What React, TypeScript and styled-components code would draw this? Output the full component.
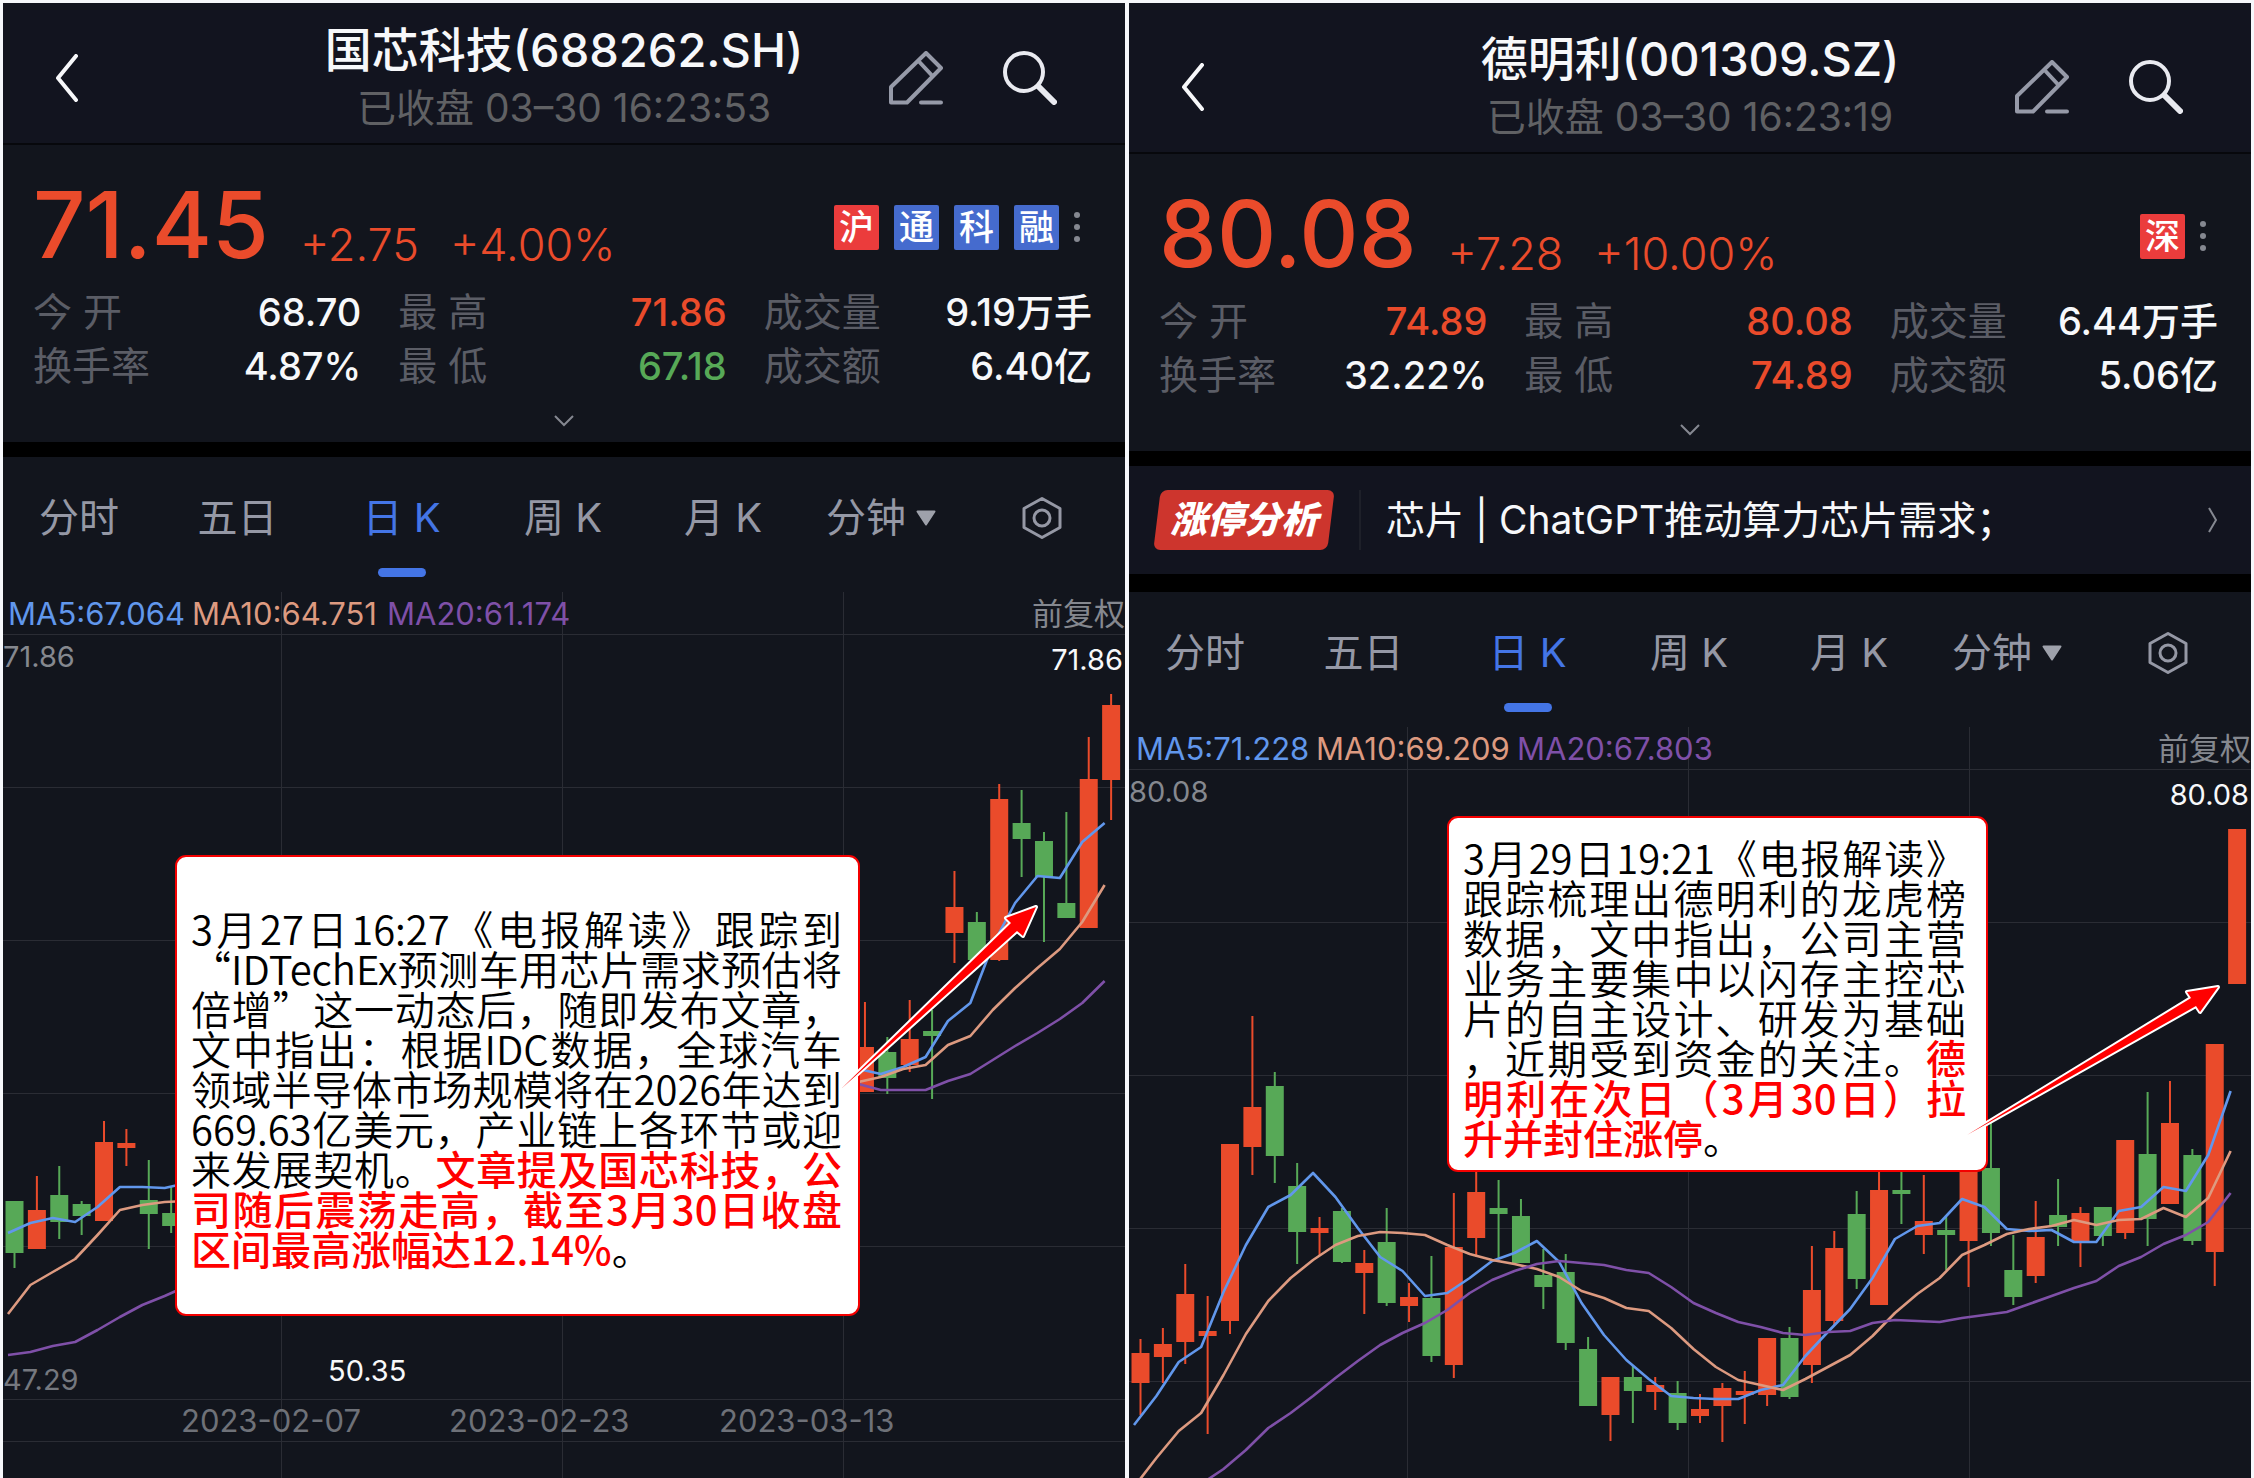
import React from 'react';
import styled, { createGlobalStyle } from 'styled-components';

const RED = '#ea4b2b';
const GREEN = '#57a957';
const WHITE = '#f7f8fa';
const ACCENT = '#4475e6';
const MA5 = '#6197ec';
const MA10 = '#dd9a80';
const MA20 = '#7f50a8';

const Global = createGlobalStyle`
  * { box-sizing: border-box; }
  body {
    margin: 0;
    background: #f6f7fb;
    font-family: Inter, "Noto Sans CJK SC", sans-serif;
  }
  button {
    padding: 0;
    border: 0;
    background: none;
    color: inherit;
    font: inherit;
    cursor: pointer;
  }
  svg { display: block; }
`;

const Page = styled.main`
  display: grid;
  grid-template-columns: 1fr 1fr;
  gap: 4px;
  min-height: 100vh;
  padding: 3px 3px 0 3px;
`;

const Panel = styled.section`
  display: flex;
  flex-direction: column;
  min-width: 0;
  overflow: hidden;
  background: #12151d;
`;

const Header = styled.header<{ $top: number }>`
  display: grid;
  grid-template-columns: 1fr auto 1fr;
  align-items: center;
  padding: ${(p) => p.$top}px 0 7px;
  border-bottom: 2px solid #07080c;
  background: #12141f;
`;

const BackButton = styled.button`
  justify-self: start;
  margin-left: 52px;
`;

const HeaderActions = styled.div`
  display: flex;
  justify-content: flex-end;
  gap: 60px;
  padding-right: 68px;
`;

const Titles = styled.div`
  text-align: center;
  white-space: nowrap;
`;

const Title = styled.h1`
  margin: 0;
  color: ${WHITE};
  font-size: 47px;
  font-weight: 500;
  line-height: 60px;
`;

const Subtitle = styled.p`
  margin: 0;
  color: #606164;
  font-size: 39px;
  line-height: 56px;
`;

const Quote = styled.div`
  display: flex;
  flex-direction: column;
  gap: 12px;
  padding: 32px 33px 0 30px;
`;

const PriceRow = styled.div`
  display: flex;
  align-items: flex-end;
  gap: 31px;
  height: 96px;
  color: ${RED};
`;

const Price = styled.strong`
  font-size: 92px;
  font-weight: 500;
  line-height: 96px;
`;

const Change = styled.span`
  font-size: 45px;
  font-weight: 300;
  line-height: 56px;
`;

const Badges = styled.div`
  display: flex;
  align-items: center;
  align-self: center;
  gap: 15px;
  margin-left: auto;
  padding: 4px 12px 0 0;
`;

const Badge = styled.span<{ $hot?: boolean }>`
  width: 45px;
  border-radius: 2px;
  background: ${(p) => (p.$hot ? '#eb3c3c' : '#456bce')};
  color: #fff;
  font-size: 35px;
  font-weight: 500;
  line-height: 45px;
  text-align: center;
`;

const Stats = styled.dl`
  display: grid;
  grid-template-columns: repeat(3, 1fr);
  column-gap: 37px;
  margin: 0;
`;

const Stat = styled.div`
  display: flex;
  justify-content: space-between;
  line-height: 54px;
  white-space: nowrap;
`;

const StatLabel = styled.dt`
  color: #5b5d66;
  font-size: 39px;
`;

const StatValue = styled.dd<{ $color: string }>`
  margin: 0;
  color: ${(p) => p.$color};
  font-size: 38px;
  font-weight: 500;
`;

const Expand = styled.button`
  display: flex;
  align-items: center;
  justify-content: center;
  height: 49px;
  padding-top: 6px;
`;

const Strip = styled.div<{ $size: number }>`
  height: ${(p) => p.$size}px;
  background: #000;
`;

const Analysis = styled.a`
  display: flex;
  align-items: center;
  height: 108px;
  padding: 0 34px 0 28px;
  background: #12141f;
  color: ${WHITE};
  text-decoration: none;
`;

const AnalysisTag = styled.span`
  position: relative;
  z-index: 0;
  width: 174px;
  color: #fff;
  font-size: 37px;
  font-style: italic;
  font-weight: 900;
  line-height: 60px;
  text-align: center;
  white-space: nowrap;

  &::before {
    content: '';
    position: absolute;
    inset: 0;
    z-index: -1;
    border-radius: 7px;
    background: #cd352d;
    transform: skewX(-7deg);
  }
`;

const AnalysisText = styled.span`
  flex: 1;
  margin-left: 28px;
  padding-left: 25px;
  border-left: 2px solid #1e2029;
  font-size: 39px;
  line-height: 60px;
  white-space: nowrap;
`;

const Tabs = styled.nav`
  display: grid;
  grid-template-columns: 152fr 165fr 163fr 160fr 160fr 156fr 166fr;
  justify-items: center;
  align-items: start;
  height: 135px;
  padding-top: 37px;
`;

const Tab = styled.button<{ $active?: boolean }>`
  display: flex;
  align-items: center;
  justify-content: center;
  gap: 10px;
  position: relative;
  height: 48px;
  color: ${(p) => (p.$active ? ACCENT : '#9598a5')};
  font-size: 40px;
  line-height: 48px;
  white-space: nowrap;

  &::after {
    content: '';
    display: ${(p) => (p.$active ? 'block' : 'none')};
    position: absolute;
    top: 74px;
    width: 48px;
    height: 9px;
    border-radius: 5px;
    background: ${ACCENT};
  }
`;

const Plot = styled.div`
  position: relative;
  flex: 1;
  min-height: 700px;
`;

const Layer = styled.svg`
  position: absolute;
  inset: 0;
  width: 100%;
  height: 100%;
`;

const Label = styled.text<{ $color: string; $size?: number }>`
  fill: ${(p) => p.$color};
  font-size: ${(p) => p.$size ?? 29}px;
`;

const Callout = styled.aside<{ $left: number; $top: number; $width: number; $pad: string }>`
  position: absolute;
  left: ${(p) => p.$left}px;
  top: ${(p) => p.$top}px;
  width: ${(p) => p.$width}px;
  padding: ${(p) => p.$pad};
  border: 2px solid #f40000;
  border-radius: 11px;
  background: #fff;
  color: #000;
  font-family: "Noto Sans CJK SC", sans-serif;
  font-size: 40px;
  font-weight: 350;
  line-height: 40px;
  text-spacing-trim: space-all;
`;

const Line = styled.span<{ $loose?: boolean }>`
  display: block;
  text-align-last: ${(p) => (p.$loose ? 'left' : 'justify')};
  white-space: nowrap;
`;

const Mark = styled.b`
  color: #f00;
  font-weight: 500;
`;

type Pair = [number, number];
/* index, body top, body bottom, wick top, wick bottom, colour */
type Candle = [number, number, number, number, number, 'r' | 'g'];

interface Stock {
  title: string;
  time: string;
  headerTop: number;
  price: string;
  change: string;
  percent: string;
  badges: string[];
  stats: [string, string, string][];
  analysis?: string;
  ma: [string, string, string];
  maX: [number, number, number];
  high: string;
  chartTop: number;
  chartHeight: number;
  candles: Candle[];
  lines: { color: string; parts: Pair[][] }[];
  gridY: number[];
  labels: { x: number; y: number; text: string; color: string; size: number }[];
  arrow: string;
}

const seq = (start: number, ys: number[]): Pair[] => ys.map((y, i) => [start + i, y]);

const left: Stock = {
  title: '国芯科技(688262.SH)',
  time: '已收盘 03–30 16:23:53',
  headerTop: 17,
  price: '71.45',
  change: '+2.75',
  percent: '+4.00%',
  badges: ['沪', '通', '科', '融'],
  stats: [
    ['今 开', '68.70', WHITE],
    ['最 高', '71.86', RED],
    ['成交量', '9.19万手', WHITE],
    ['换手率', '4.87%', WHITE],
    ['最 低', '67.18', GREEN],
    ['成交额', '6.40亿', WHITE],
  ],
  ma: ['MA5:67.064', 'MA10:64.751', 'MA20:61.174'],
  maX: [5, 189, 384],
  high: '71.86',
  chartTop: 592,
  chartHeight: 886,
  candles: [
    [0, 1201, 1253, 1201, 1268, 'g'], [1, 1210, 1249, 1176, 1249, 'r'], [2, 1195, 1222, 1166, 1239, 'g'],
    [3, 1204, 1216, 1201, 1235, 'g'], [4, 1142, 1221, 1121, 1221, 'r'], [5, 1143, 1148, 1129, 1166, 'r'],
    [6, 1200, 1214, 1160, 1249, 'g'], [7, 1213, 1226, 1186, 1233, 'g'], [38, 1047, 1092, 1002, 1092, 'r'],
    [39, 1052, 1078, 1037, 1094, 'g'], [40, 1039, 1065, 1000, 1072, 'r'], [41, 1031, 1036, 1010, 1099, 'g'],
    [42, 907, 933, 871, 963, 'r'], [43, 922, 960, 912, 960, 'g'], [44, 799, 960, 784, 961, 'r'],
    [45, 823, 839, 790, 877, 'g'], [46, 841, 877, 832, 942, 'g'], [47, 903, 918, 812, 918, 'g'],
    [48, 779, 928, 737, 928, 'r'], [49, 705, 780, 694, 820, 'r'],
  ],
  lines: [
    { color: MA5, parts: [
      seq(0, [1233, 1223, 1218, 1222, 1207, 1187, 1187, 1188, 1183]),
      seq(38, [1069, 1074, 1067, 1057, 1021, 1003, 945, 903, 876, 878, 842, 823]),
    ] },
    { color: MA10, parts: [
      seq(0, [1314, 1285, 1272, 1259, 1235, 1210, 1205, 1202, 1201]),
      seq(38, [1082, 1077, 1069, 1065, 1045, 1036, 1010, 988, 968, 949, 922, 885]),
    ] },
    { color: MA20, parts: [
      seq(0, [1355, 1352, 1346, 1342, 1330, 1317, 1305, 1296, 1286]),
      seq(38, [1084, 1090, 1090, 1090, 1081, 1074, 1060, 1046, 1033, 1019, 1003, 981]),
    ] },
  ],
  gridY: [634, 787, 940, 1093, 1246, 1399, 1441],
  labels: [
    { x: 0, y: 1390, text: '47.29', color: '#75787f', size: 29 },
    { x: 325, y: 1381, text: '50.35', color: WHITE, size: 29 },
    { x: 178, y: 1432, text: '2023-02-07', color: '#6e7178', size: 31 },
    { x: 446, y: 1432, text: '2023-02-23', color: '#6e7178', size: 31 },
    { x: 716, y: 1432, text: '2023-03-13', color: '#6e7178', size: 31 },
  ],
  arrow: 'M838 1089 L1008 923 L1003 918 L1033 907 L1020 936 L1014 931 Z',
};

const right: Stock = {
  title: '德明利(001309.SZ)',
  time: '已收盘 03–30 16:23:19',
  headerTop: 26,
  price: '80.08',
  change: '+7.28',
  percent: '+10.00%',
  badges: ['深'],
  stats: [
    ['今 开', '74.89', RED],
    ['最 高', '80.08', RED],
    ['成交量', '6.44万手', WHITE],
    ['换手率', '32.22%', WHITE],
    ['最 低', '74.89', RED],
    ['成交额', '5.06亿', WHITE],
  ],
  analysis: '芯片 | ChatGPT推动算力芯片需求；',
  ma: ['MA5:71.228', 'MA10:69.209', 'MA20:67.803'],
  maX: [7, 187, 388],
  high: '80.08',
  chartTop: 727,
  chartHeight: 751,
  candles: [
    [0, 1353, 1383, 1339, 1415, 'r'], [1, 1344, 1357, 1328, 1383, 'r'], [2, 1294, 1342, 1264, 1364, 'r'],
    [3, 1331, 1336, 1296, 1434, 'r'], [4, 1144, 1321, 1144, 1334, 'r'], [5, 1107, 1147, 1016, 1175, 'r'],
    [6, 1086, 1156, 1072, 1183, 'g'], [7, 1186, 1232, 1163, 1264, 'g'], [8, 1228, 1233, 1217, 1255, 'r'],
    [9, 1211, 1262, 1208, 1263, 'g'], [10, 1263, 1273, 1250, 1314, 'r'], [11, 1242, 1303, 1208, 1306, 'g'],
    [12, 1297, 1306, 1283, 1322, 'r'], [13, 1298, 1356, 1256, 1362, 'g'], [14, 1247, 1365, 1193, 1378, 'r'],
    [15, 1192, 1238, 1170, 1257, 'r'], [16, 1208, 1214, 1180, 1258, 'g'], [17, 1216, 1263, 1199, 1263, 'g'],
    [18, 1275, 1287, 1249, 1309, 'g'], [19, 1272, 1343, 1254, 1350, 'g'], [20, 1349, 1406, 1337, 1406, 'g'],
    [21, 1377, 1415, 1377, 1441, 'r'], [22, 1377, 1391, 1365, 1423, 'g'], [23, 1385, 1392, 1377, 1410, 'r'],
    [24, 1393, 1423, 1381, 1430, 'g'], [25, 1409, 1416, 1394, 1423, 'r'], [26, 1388, 1406, 1383, 1442, 'r'],
    [27, 1391, 1395, 1371, 1424, 'r'], [28, 1338, 1395, 1338, 1406, 'r'], [29, 1338, 1397, 1327, 1399, 'g'],
    [30, 1290, 1365, 1246, 1383, 'r'], [31, 1248, 1321, 1231, 1325, 'r'], [32, 1214, 1279, 1191, 1289, 'g'],
    [33, 1190, 1305, 1167, 1305, 'r'], [34, 1190, 1194, 1167, 1224, 'g'], [35, 1221, 1235, 1175, 1254, 'r'],
    [36, 1230, 1235, 1217, 1270, 'g'], [37, 1160, 1241, 1160, 1287, 'r'], [38, 1168, 1233, 1120, 1246, 'g'],
    [39, 1270, 1297, 1235, 1305, 'g'], [40, 1237, 1276, 1201, 1283, 'r'], [41, 1215, 1227, 1179, 1246, 'g'],
    [42, 1213, 1241, 1207, 1267, 'r'], [43, 1207, 1236, 1207, 1246, 'g'], [44, 1140, 1233, 1140, 1239, 'r'],
    [45, 1154, 1219, 1092, 1246, 'g'], [46, 1123, 1204, 1081, 1204, 'r'], [47, 1155, 1241, 1149, 1245, 'g'],
    [48, 1044, 1252, 1044, 1286, 'r'], [49, 829, 984, 829, 984, 'r'],
  ],
  lines: [
    { color: MA5, parts: [seq(0, [
      1425, 1396, 1362, 1347, 1292, 1245, 1207, 1195, 1173, 1197, 1228, 1257, 1271, 1296, 1293, 1278, 1261,
      1253, 1241, 1262, 1303, 1335, 1360, 1379, 1396, 1398, 1399, 1399, 1390, 1385, 1356, 1332, 1309, 1278,
      1239, 1226, 1223, 1199, 1207, 1229, 1231, 1230, 1242, 1242, 1211, 1207, 1187, 1191, 1155, 1091,
    ])] },
    { color: MA10, parts: [seq(0, [
      1487, 1458, 1431, 1413, 1375, 1334, 1301, 1278, 1260, 1245, 1236, 1232, 1233, 1235, 1245, 1254, 1260,
      1264, 1269, 1277, 1291, 1298, 1308, 1311, 1328, 1349, 1367, 1380, 1385, 1390, 1379, 1367, 1355, 1336,
      1313, 1294, 1278, 1255, 1245, 1234, 1229, 1226, 1220, 1225, 1220, 1219, 1208, 1217, 1198, 1151,
    ])] },
    { color: MA20, parts: [seq(3, [
      1484, 1469, 1450, 1428, 1413, 1396, 1378, 1361, 1345, 1333, 1323, 1310, 1293, 1280, 1271, 1264, 1261,
      1263, 1265, 1270, 1273, 1287, 1303, 1313, 1322, 1327, 1333, 1335, 1332, 1331, 1323, 1320, 1321, 1322,
      1318, 1315, 1312, 1304, 1296, 1288, 1281, 1266, 1257, 1244, 1235, 1222, 1193,
    ])] },
  ],
  gridY: [769, 922, 1075, 1228, 1381],
  labels: [],
  arrow: 'M838 1135 L1062 998 L1058 992 L1089 987 L1071 1012 L1067 1006 Z',
};

const PITCH = 22.38;
const INK: Record<'r' | 'g', string> = { r: RED, g: GREEN };

function Chart({ stock }: { stock: Stock }) {
  const { chartTop: top, chartHeight: height } = stock;
  return (
    <Layer viewBox={`0 ${top} 1122 ${height}`} preserveAspectRatio="xMidYMin slice" role="img" aria-label="日K">
      <g stroke="#2a2c34" strokeWidth="1">
        {[278, 559, 840].map((x) => (
          <line key={x} x1={x + 0.5} x2={x + 0.5} y1={top} y2={top + height} />
        ))}
        {stock.gridY.map((y) => (
          <line key={y} x1="0" x2="1122" y1={y + 0.5} y2={y + 0.5} />
        ))}
      </g>
      {stock.candles.map(([i, t, b, wt, wb, c]) => {
        const x = 11.5 + i * PITCH;
        return (
          <g key={i} fill={INK[c]}>
            <rect x={x - 1} y={wt} width="2" height={wb - wt} />
            <rect x={x - 9} y={t} width="18" height={b - t} />
          </g>
        );
      })}
      {stock.lines.map((line) =>
        line.parts.map((part, n) => (
          <polyline
            key={line.color + n}
            points={part.map(([i, y]) => `${5 + i * PITCH},${y}`).join(' ')}
            fill="none"
            stroke={line.color}
            strokeWidth="2.6"
            strokeLinejoin="round"
          />
        )),
      )}
      <Label $size={31} $color={MA5} x={stock.maX[0]} y={top + 33}>{stock.ma[0]}</Label>
      <Label $size={31} $color={MA10} x={stock.maX[1]} y={top + 33}>{stock.ma[1]}</Label>
      <Label $size={31} $color={MA20} x={stock.maX[2]} y={top + 33}>{stock.ma[2]}</Label>
      <Label $size={31} $color="#85888f" x="1122" y={top + 33} textAnchor="end">前复权</Label>
      <Label $color="#85888f" x="0" y={top + 75}>{stock.high}</Label>
      <Label $color={WHITE} x="1120" y={top + 78} textAnchor="end">{stock.high}</Label>
      {stock.labels.map((l) => (
        <Label key={l.text} $size={l.size} $color={l.color} x={l.x} y={l.y}>{l.text}</Label>
      ))}
    </Layer>
  );
}

function StockPanel({ stock, children }: { stock: Stock; children: React.ReactNode }) {
  return (
    <Panel>
      <Header $top={stock.headerTop}>
        <BackButton aria-label="返回">
          <svg width="24" height="48" viewBox="0 0 24 48" fill="none" stroke="#f7f8fa" strokeWidth="4" strokeLinecap="round" strokeLinejoin="round">
            <path d="M21 2 L3 24 L21 46" />
          </svg>
        </BackButton>
        <Titles>
          <Title>{stock.title}</Title>
          <Subtitle>{stock.time}</Subtitle>
        </Titles>
        <HeaderActions>
          <button aria-label="编辑">
            <svg width="54" height="54" viewBox="0 0 54 54" fill="none" stroke="#969aa8" strokeWidth="4" strokeLinecap="round" strokeLinejoin="round">
              <path d="M37 2 L52 17 L18 51.500 H2 V36 Z M29.500 10 L43 24.500" />
              <path d="M32 51.500 H52" />
            </svg>
          </button>
          <button aria-label="搜索">
            <svg width="54" height="54" viewBox="0 0 54 54" fill="none" stroke="#e9eaf0" strokeLinecap="round">
              <circle cx="21" cy="21" r="19" strokeWidth="4" />
              <path d="M35.500 35.500 L51 51" strokeWidth="6" />
            </svg>
          </button>
        </HeaderActions>
      </Header>
      <Quote>
        <PriceRow>
          <Price>{stock.price}</Price>
          <Change>{stock.change}</Change>
          <Change>{stock.percent}</Change>
          <Badges>
            {stock.badges.map((b, i) => (
              <Badge key={b} $hot={i === 0}>{b}</Badge>
            ))}
            <svg width="6" height="32" viewBox="0 0 6 32" fill="#858891">
              <circle cx="3" cy="4" r="3" />
              <circle cx="3" cy="16" r="3" />
              <circle cx="3" cy="28" r="3" />
            </svg>
          </Badges>
        </PriceRow>
        <Stats>
          {stock.stats.map(([label, value, color]) => (
            <Stat key={label}>
              <StatLabel>{label}</StatLabel>
              <StatValue $color={color}>{value}</StatValue>
            </Stat>
          ))}
        </Stats>
      </Quote>
      <Expand aria-label="展开">
        <svg width="20" height="12" viewBox="0 0 20 12" fill="none" stroke="#858891" strokeWidth="2">
          <path d="M1 1 L10 10 L19 1" />
        </svg>
      </Expand>
      <Strip $size={15} />
      {stock.analysis && (
        <>
          <Analysis href="#analysis">
            <AnalysisTag>涨停分析</AnalysisTag>
            <AnalysisText>{stock.analysis}</AnalysisText>
            <svg width="9" height="26" viewBox="0 0 9 26" fill="none" stroke="#858891" strokeWidth="2">
              <path d="M1 1 L8 13 L1 25" />
            </svg>
          </Analysis>
          <Strip $size={18} />
        </>
      )}
      <Tabs>
        <Tab>分时</Tab>
        <Tab>五日</Tab>
        <Tab $active>日 K</Tab>
        <Tab>周 K</Tab>
        <Tab>月 K</Tab>
        <Tab>
          分钟
          <svg width="20" height="16" viewBox="0 0 20 16" fill="#9ea1ab" stroke="#9ea1ab" strokeWidth="2" strokeLinejoin="round">
            <path d="M1.500 1.500 H18.500 L10 14.500 Z" />
          </svg>
        </Tab>
        <Tab aria-label="设置">
          <svg width="40" height="44" viewBox="0 0 40 44" fill="none" stroke="#9598a5" strokeWidth="3" strokeLinejoin="round">
            <path d="M20 2.500 L38 12.500 V31.500 L20 41.500 L2 31.500 V12.500 Z" />
            <circle cx="20" cy="22" r="8" />
          </svg>
        </Tab>
      </Tabs>
      <Plot>
        <Chart stock={stock} />
        {children}
        <Layer viewBox={`0 ${stock.chartTop} 1122 ${stock.chartHeight}`} preserveAspectRatio="xMidYMin slice" aria-hidden="true">
          <path d={stock.arrow} fill="#f00" stroke="#fff" strokeWidth="4" strokeLinejoin="round" paintOrder="stroke" />
        </Layer>
      </Plot>
    </Panel>
  );
}

export default function App() {
  return (
    <>
      <Global />
      <Page lang="zh-CN">
        <StockPanel stock={left}>
          <Callout $left={172} $top={263} $width={685} $pad="51px 16px 46px 14px">
            <Line>3月27日16:27《电报解读》跟踪到</Line>
            <Line>“IDTechEx预测车用芯片需求预估将</Line>
            <Line>倍增”这一动态后，随即发布文章，</Line>
            <Line>文中指出：根据IDC数据，全球汽车</Line>
            <Line>领域半导体市场规模将在2026年达到</Line>
            <Line>669.63亿美元，产业链上各环节或迎</Line>
            <Line>来发展契机。<Mark>文章提及国芯科技，公</Mark></Line>
            <Line><Mark>司随后震荡走高，截至3月30日收盘</Mark></Line>
            <Line $loose><Mark>区间最高涨幅达12.14%</Mark>。</Line>
          </Callout>
        </StockPanel>
        <StockPanel stock={right}>
          <Callout $left={318} $top={89} $width={541} $pad="19px 20px 13px 14px">
            <Line>3月29日19:21《电报解读》</Line>
            <Line>跟踪梳理出德明利的龙虎榜</Line>
            <Line>数据，文中指出，公司主营</Line>
            <Line>业务主要集中以闪存主控芯</Line>
            <Line>片的自主设计、研发为基础</Line>
            <Line>，近期受到资金的关注。<Mark>德</Mark></Line>
            <Line><Mark>明利在次日（3月30日）拉</Mark></Line>
            <Line $loose><Mark>升并封住涨停</Mark>。</Line>
          </Callout>
        </StockPanel>
      </Page>
    </>
  );
}
